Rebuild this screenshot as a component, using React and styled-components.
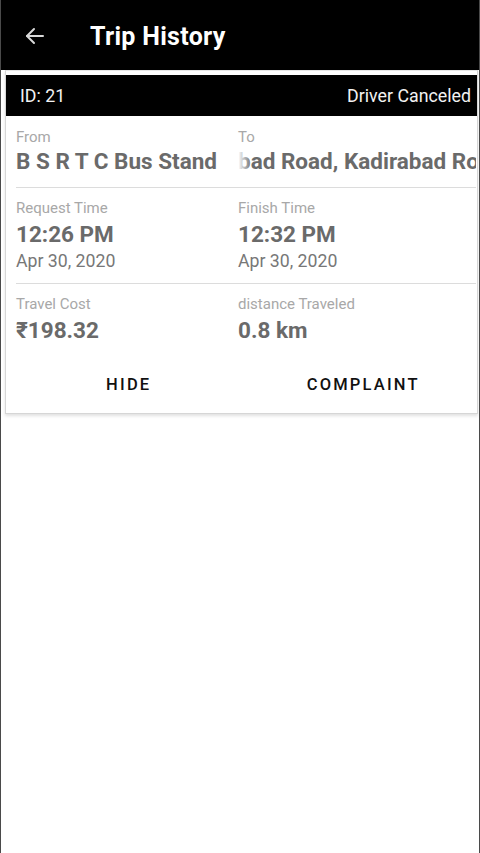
import React from "react";
import styled, { createGlobalStyle } from "styled-components";

const Global = createGlobalStyle`
  html, body { margin: 0; padding: 0; background: #fff; }
  body { font-family: Roboto, "Noto Sans", Arial, sans-serif; }
  * { box-sizing: border-box; }
`;

const Screen = styled.div`
  width: 480px;
  min-height: 853px;
  background: #fff;
  border-left: 1px solid #4a4a4a;
  border-right: 1px solid #4a4a4a;
  overflow: hidden;
`;

const AppBar = styled.div`
  height: 70px;
  background: #000;
  display: flex;
  align-items: center;
  padding-left: 22px;
  padding-top: 2px;
  margin-left: -1px;
  margin-right: -1px;
`;

const BackButton = styled.div`
  width: 26px;
  height: 26px;
  display: flex;
  align-items: center;
  justify-content: center;
  color: #d8d8d8;
`;

const Title = styled.div`
  margin-left: 42px;
  color: #fff;
  font-size: 25px;
  font-weight: 700;
  letter-spacing: 0.3px;
`;

const Card = styled.div`
  margin: 0 1px 0 4px;
  border: 1px solid #d6d6d6;
  border-top-color: #e6e6e6;
  padding: 4px 0 5px 0;
  background: #fff;
  box-shadow: 0 2px 3px rgba(0, 0, 0, 0.12);
`;

const CardHeader = styled.div`
  height: 41px;
  background: #000;
  color: #f2f2f2;
  display: flex;
  align-items: center;
  justify-content: space-between;
  padding: 0 6px 0 14px;
  font-size: 17.8px;
`;

const Section = styled.div`
  margin: 0 1px 0 10px;
  padding: ${(p) => p.$pt}px 0 ${(p) => p.$pb}px;
  border-bottom: ${(p) => (p.$divider ? "1px solid #dcdcdc" : "none")};
  display: grid;
  grid-template-columns: 222px 1fr;
`;

const Col = styled.div`
  display: flex;
  flex-direction: column;
  min-width: 0;
`;

const Label = styled.div`
  font-size: 15px;
  line-height: 18px;
  color: #a8a8a8;
`;

const Value = styled.div`
  margin-top: ${(p) => p.$mt}px;
  font-size: 22.5px;
  line-height: 26px;
  font-weight: 700;
  color: #6a6a6a;
  white-space: nowrap;
`;

const Clip = styled.div`
  position: relative;
  overflow: hidden;
  white-space: nowrap;
  &::before {
    content: "";
    position: absolute;
    left: 0;
    top: 0;
    bottom: 0;
    width: 14px;
    background: linear-gradient(to right, #fff, rgba(255, 255, 255, 0));
  }
`;

const DateText = styled.div`
  margin-top: 3px;
  font-size: 17.7px;
  line-height: 22px;
  color: #777;
`;

const Actions = styled.div`
  margin-top: 17px;
  display: grid;
  grid-template-columns: 1fr 1fr;
`;

const ActionButton = styled.button`
  height: 48px;
  border: none;
  background: transparent;
  font-family: Roboto, "Noto Sans", Arial, sans-serif;
  font-size: 16.5px;
  font-weight: 500;
  letter-spacing: 2.2px;
  color: #111;
  padding: 0;
  margin-left: ${(p) => p.$shift || 0}px;
`;

function BackArrow() {
  return (
    <svg width="24" height="24" viewBox="0 0 24 24" fill="none" stroke="currentColor" strokeWidth="2" strokeLinecap="round" strokeLinejoin="round">
      <path d="M20 12H4" />
      <path d="M11 5l-7 7 7 7" />
    </svg>
  );
}

export default function App() {
  return (
    <>
      <Global />
      <Screen>
        <AppBar>
          <BackButton>
            <BackArrow />
          </BackButton>
          <Title>Trip History</Title>
        </AppBar>
        <Card>
          <CardHeader>
            <span>ID: 21</span>
            <span>Driver Canceled</span>
          </CardHeader>
          <Section $pt={12} $pb={13} $divider>
            <Col>
              <Label>From</Label>
              <Value $mt={2}>B S R T C Bus Stand</Value>
            </Col>
            <Col>
              <Label>To</Label>
              <Clip>
                <Value $mt={2}>bad Road, Kadirabad Ro</Value>
              </Clip>
            </Col>
          </Section>
          <Section $pt={11} $pb={11} $divider>
            <Col>
              <Label>Request Time</Label>
              <Value $mt={4}>12:26 PM</Value>
              <DateText>Apr 30, 2020</DateText>
            </Col>
            <Col>
              <Label>Finish Time</Label>
              <Value $mt={4}>12:32 PM</Value>
              <DateText>Apr 30, 2020</DateText>
            </Col>
          </Section>
          <Section $pt={11} $pb={0}>
            <Col>
              <Label>Travel Cost</Label>
              <Value $mt={4}>₹198.32</Value>
            </Col>
            <Col>
              <Label>distance Traveled</Label>
              <Value $mt={4}>0.8 km</Value>
            </Col>
          </Section>
          <Actions>
            <ActionButton $shift={10}>HIDE</ActionButton>
            <ActionButton $shift={8}>COMPLAINT</ActionButton>
          </Actions>
        </Card>
      </Screen>
    </>
  );
}
